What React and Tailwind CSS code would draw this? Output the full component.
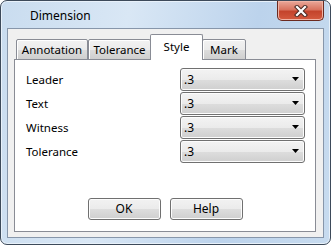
import React from "react";

function Dropdown() {
  return (
    <div className="relative w-[125px] h-[23px] rounded-[3px] border border-[#707070] bg-[linear-gradient(#f3f3f3_0%,#ebebeb_50%,#dddddd_51%,#cfcfcf_100%)] flex items-center shadow-[inset_0_0_0_1px_#fcfcfc]">
      <span className="ml-[3px] text-[12px] leading-none text-black">.3</span>
      <svg className="ml-auto mr-[4px]" width="8" height="5" viewBox="0 0 8 5">
        <path d="M0 0 H7 L3.5 4 Z" fill="#000" />
      </svg>
    </div>
  );
}

function Row({ label }) {
  return (
    <div className="flex items-center h-[23px]">
      <span className="w-[154px] text-[11.5px] text-black">{label}</span>
      <Dropdown />
    </div>
  );
}

function Tab({ label, w, selected }) {
  if (selected) {
    return (
      <div
        className={`${w} h-[26px] bg-white border border-b-0 border-[#898c95] rounded-t-[2px] flex items-start justify-center pt-[3px] text-[11.5px] text-black relative z-10 -mx-[1px]`}
      >
        {label}
      </div>
    );
  }
  return (
    <div
      className={`${w} h-[21px] border border-[#898c95] rounded-t-[2px] bg-[linear-gradient(#f2f2f2_0%,#ebebeb_50%,#dddddd_51%,#cfcfcf_100%)] flex items-center justify-center text-[11.5px] text-black shadow-[inset_1px_1px_0_#ffffff]`}
    >
      {label}
    </div>
  );
}

export default function App() {
  return (
    <div
      className="w-[331px] h-[245px] bg-white overflow-hidden"
      style={{ fontFamily: '"Noto Sans", "Open Sans", sans-serif' }}
    >
      <div className="w-[331px] h-[245px] rounded-[7px] border border-[#3d4a5a] bg-[linear-gradient(100deg,#c9dcef_0%,#d9e7f5_35%,#bcd3ec_70%,#c7dbef_100%)] flex flex-col shadow-[inset_0_0_0_1px_#e8f1fa]">
        <div className="h-[27px] flex items-start shrink-0">
          <span className="ml-[29px] mt-[7px] text-[12px] text-black leading-[16px]">
            Dimension
          </span>
          <div className="ml-auto mr-[6px] w-[47px] h-[20px] rounded-b-[5px] border border-t-0 border-[#6b2a20] bg-[linear-gradient(#e9a89a_0%,#d8735f_45%,#c4442c_55%,#d45a3f_100%)] flex items-center justify-center shadow-[inset_0_0_0_1px_#f0b3a5]">
            <svg width="14" height="12" viewBox="0 0 14 12">
              <path d="M3 2 L11 10 M11 2 L3 10" stroke="#4a2a24" strokeWidth="4.2" strokeLinecap="square" />
              <path d="M3 2 L11 10 M11 2 L3 10" stroke="#ffffff" strokeWidth="2.2" strokeLinecap="square" />
            </svg>
          </div>
        </div>
        <div className="mx-[6px] w-[317px] h-[210px] border border-[#8796aa] bg-[#f0f0f0] flex flex-col shrink-0">
          <div className="ml-[8px] mt-[5px] flex items-end h-[26px] relative z-10">
            <Tab label="Annotation" w="w-[72px]" />
            <Tab label="Tolerance" w="w-[63px]" />
            <Tab label="Style" w="w-[53px]" selected />
            <Tab label="Mark" w="w-[44px]" />
          </div>
          <div className="ml-[6px] -mt-[1px] w-[302px] h-[173px] border border-[#898c95] bg-white flex flex-col">
            <div className="pl-[11px] pt-[8px] flex flex-col gap-[1px]">
              <Row label="Leader" />
              <Row label="Text" />
              <Row label="Witness" />
              <Row label="Tolerance" />
            </div>
            <div className="mt-[35px] flex justify-center gap-[9px]">
              <button className="w-[73px] h-[22px] rounded-[3px] border border-[#707070] bg-[linear-gradient(#f2f2f2_0%,#ebebeb_50%,#dddddd_51%,#cfcfcf_100%)] text-[12px] text-black shadow-[inset_0_0_0_1px_#fcfcfc] leading-none">
                OK
              </button>
              <button className="w-[73px] h-[22px] rounded-[3px] border border-[#707070] bg-[linear-gradient(#f2f2f2_0%,#ebebeb_50%,#dddddd_51%,#cfcfcf_100%)] text-[12px] text-black shadow-[inset_0_0_0_1px_#fcfcfc] leading-none">
                Help
              </button>
            </div>
          </div>
        </div>
      </div>
    </div>
  );
}
